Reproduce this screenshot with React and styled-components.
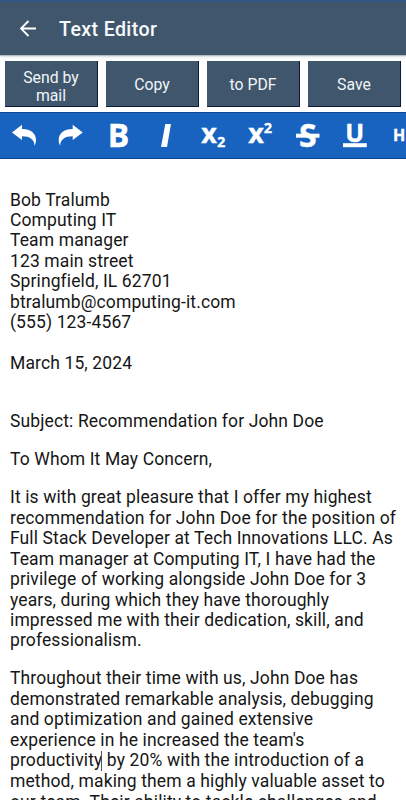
import React from "react";
import styled, { createGlobalStyle } from "styled-components";

const GlobalStyle = createGlobalStyle`
  body {
    margin: 0;
    background: #fff;
    font-family: Roboto, sans-serif;
  }
`;

const Screen = styled.div`
  width: 406px;
  height: 800px;
  overflow: hidden;
  display: flex;
  flex-direction: column;
  background: #fff;
`;

const Header = styled.header`
  box-sizing: border-box;
  flex: none;
  height: 55px;
  display: flex;
  align-items: center;
  gap: 22px;
  padding: 0 19px 1px 20px;
  background: #40566d;
  border-top: 2px solid #315884;
  box-shadow: 0 1px 1px #b4bdc6, 0 2px 3px #dde1e5;
`;

const Title = styled.h1`
  margin: 0;
  padding-top: 2px;
  color: #f7f9fb;
  font-size: 19.6px;
  font-weight: 500;
  letter-spacing: 0.38px;
`;

const Actions = styled.div`
  flex: none;
  display: grid;
  grid-template-columns: repeat(4, 1fr);
  gap: 8px;
  padding: 6px 5px 5px;
`;

const ActionButton = styled.button`
  box-sizing: border-box;
  height: 46px;
  margin: 0;
  padding: ${({ $twoLines }) => ($twoLines ? 7 : 3)}px 14px 0;
  border: solid #0b1c38;
  border-width: 0 1px 1px 0;
  background: #40566d;
  color: #f1f5f8;
  font-family: inherit;
  font-size: 15.8px;
  line-height: 18.5px;
`;

const Toolbar = styled.div`
  box-sizing: border-box;
  flex: none;
  height: 47px;
  display: flex;
  align-items: center;
  overflow: hidden;
  background: #1763bf;
  border: solid #0c4791;
  border-width: 1px 0;
`;

const Tool = styled.div`
  flex: none;
  width: 47.3px;
  height: 47px;
  display: flex;
  align-items: center;
  justify-content: center;
`;

const ToolIcon = styled.svg`
  display: block;
  width: 47.3px;
  height: 47px;
  fill: #fff;

  & text {
    font-family: "Open Sans", "Noto Sans", sans-serif;
    font-weight: 700;
    text-anchor: middle;
    stroke: #fff;
    stroke-width: 0.4px;
  }
`;

const Document = styled.main`
  flex: 1;
  overflow: hidden;
  padding: 30.6px 0 0 10px;
  color: #161616;
  font-size: 17.5px;
  letter-spacing: 0.12px;
  line-height: 20.43px;
  white-space: nowrap;
`;

const Paragraph = styled.p`
  margin: 0 0 ${({ $gap = 17.5 }) => $gap}px;
`;

const Line = styled.span`
  display: block;
`;

const Caret = styled.span`
  display: inline-block;
  width: 1px;
  height: 20px;
  margin: 0 0 0 -1px;
  vertical-align: -5px;
  background: #555;
`;

const BackArrow = () => (
  <svg
    width="17"
    height="17"
    viewBox="0 0 17 17"
    fill="none"
    stroke="#fff"
    strokeWidth="1.8"
  >
    <path d="M16 8.5H1.5M8.5 1L1 8.5L8.5 16" />
  </svg>
);

const tools = [
  {
    name: "undo",
    icon: (
      <path d="M12 20.5L22 12.8V17C31 17 36 21.5 36 28C36 30 35.6 31.7 34.6 33.8C34.2 27.5 30 24.3 22 24.3V28Z" />
    ),
  },
  {
    name: "redo",
    icon: (
      <path d="M35.7 20.5L25.7 12.8V17C16.7 17 11.7 21.5 11.7 28C11.7 30 12.1 31.7 13.1 33.8C13.5 27.5 17.7 24.3 25.7 24.3V28Z" />
    ),
  },
  {
    name: "bold",
    icon: (
      <text x="23.4" y="35" fontSize="32">
        B
      </text>
    ),
  },
  { name: "italic", icon: <path d="M23.3 12H29L25 35H19Z" /> },
  {
    name: "subscript",
    icon: (
      <>
        <text x="20.1" y="30.7" fontSize="27">
          x
        </text>
        <text x="32.2" y="35" fontSize="14">
          2
        </text>
      </>
    ),
  },
  {
    name: "superscript",
    icon: (
      <>
        <text x="20.1" y="30.7" fontSize="27">
          x
        </text>
        <text x="32" y="21" fontSize="14">
          2
        </text>
      </>
    ),
  },
  {
    name: "strike",
    icon: (
      <>
        <text x="23.7" y="35" fontSize="32">
          S
        </text>
        <rect x="12" y="21.7" width="23.5" height="4" />
      </>
    ),
  },
  {
    name: "underline",
    icon: (
      <>
        <text x="23.8" y="29.8" fontSize="25">
          U
        </text>
        <rect x="12" y="31.2" width="23.8" height="4" />
      </>
    ),
  },
  {
    name: "heading",
    icon: (
      <text x="21" y="29.3" fontSize="16">
        H
      </text>
    ),
  },
];

const letter = [
  {
    lines: [
      "Bob Tralumb",
      "Computing IT",
      "Team manager",
      "123 main street",
      "Springfield, IL 62701",
      "btralumb@computing-it.com",
      "(555) 123-4567",
    ],
    gap: 20.4,
  },
  { lines: ["March 15, 2024"], gap: 38 },
  { lines: ["Subject: Recommendation for John Doe"] },
  { lines: ["To Whom It May Concern,"] },
  {
    lines: [
      "It is with great pleasure that I offer my highest",
      "recommendation for John Doe for the position of",
      "Full Stack Developer at Tech Innovations LLC. As",
      "Team manager at Computing IT, I have had the",
      "privilege of working alongside John Doe for 3",
      "years, during which they have thoroughly",
      "impressed me with their dedication, skill, and",
      "professionalism.",
    ],
  },
  {
    lines: [
      "Throughout their time with us, John Doe has",
      "demonstrated remarkable analysis, debugging",
      "and optimization and gained extensive",
      "experience in he increased the team's",
      <>
        productivity
        <Caret /> by 20% with the introduction of a
      </>,
      "method, making them a highly valuable asset to",
      "our team. Their ability to tackle challenges and",
    ],
  },
];

const App = () => {
  return (
    <>
      <GlobalStyle />
      <Screen>
        <Header>
          <BackArrow />
          <Title>Text Editor</Title>
        </Header>
        <Actions>
          <ActionButton $twoLines>Send by mail</ActionButton>
          <ActionButton>Copy</ActionButton>
          <ActionButton>to PDF</ActionButton>
          <ActionButton>Save</ActionButton>
        </Actions>
        <Toolbar>
          {tools.map(({ name, icon }) => (
            <Tool key={name}>
              <ToolIcon viewBox="0 0 47.3 47">{icon}</ToolIcon>
            </Tool>
          ))}
        </Toolbar>
        <Document>
          {letter.map(({ lines, gap }, i) => (
            <Paragraph key={i} $gap={gap}>
              {lines.map((line, j) => (
                <Line key={j}>{line}</Line>
              ))}
            </Paragraph>
          ))}
        </Document>
      </Screen>
    </>
  );
};

export default App;
